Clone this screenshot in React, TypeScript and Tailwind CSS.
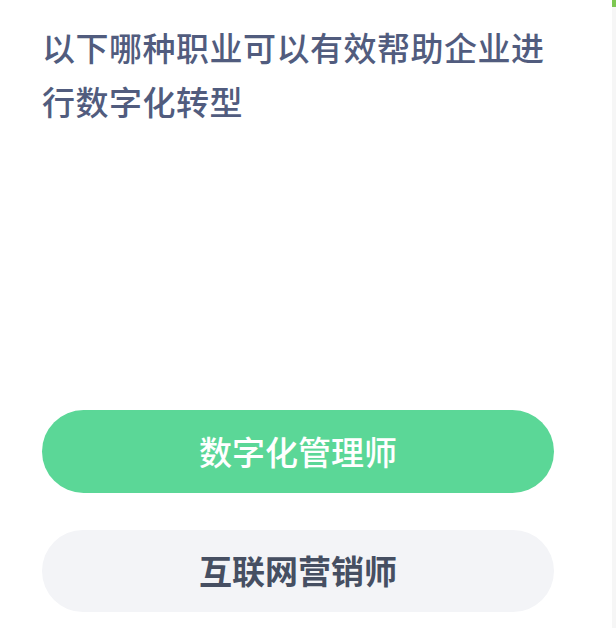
import React from "react";

export default function App() {
  const font = {
    fontFamily: '"Noto Sans CJK SC", "Noto Sans", sans-serif',
  };
  return (
    <div className="flex w-[616px] h-[628px] bg-white" style={font}>
      <div className="flex-1 flex flex-col pl-[42px]">
        <p className="mt-[20px] w-[520px] text-[33px] leading-[54px] font-medium text-[#515c7e] tracking-[0.5px]">
          以下哪种职业可以有效帮助企业进行数字化转型
        </p>
        <div className="mt-[282px] flex flex-col gap-[37px]">
          <button className="h-[83px] w-[512px] rounded-full bg-[#5bd797] text-white text-[33px] font-medium flex items-center justify-center">
            数字化管理师
          </button>
          <button className="h-[82px] w-[512px] rounded-full bg-[#f3f4f7] text-[#464f62] text-[33px] font-bold flex items-center justify-center">
            互联网营销师
          </button>
        </div>
      </div>
      <div className="w-[4px] h-full bg-[#f6f6f6] flex flex-col">
        <div className="h-[7px] bg-[#7dc852]" />
      </div>
    </div>
  );
}
